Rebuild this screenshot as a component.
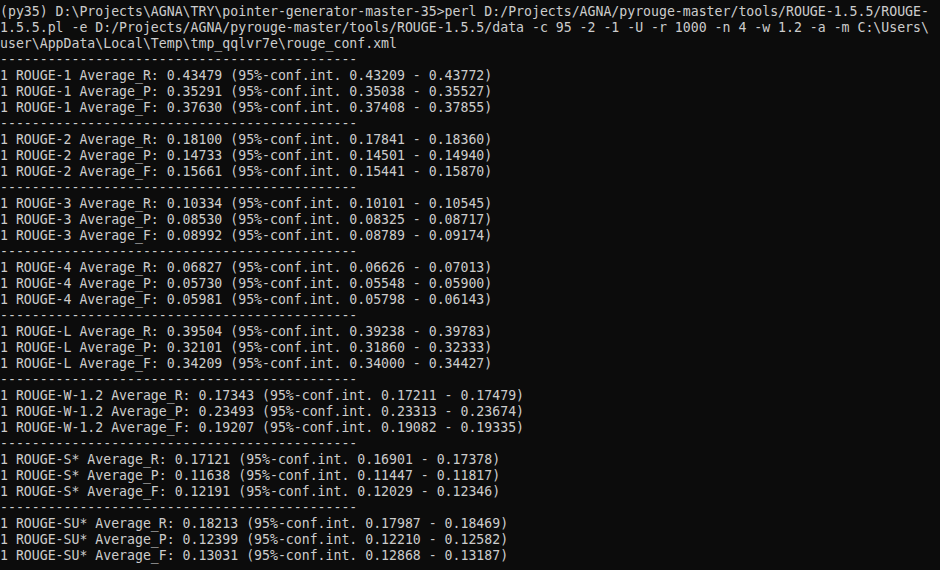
const dash = '-'.repeat(45);

const blocks: [string, string[][]][] = [
  ['ROUGE-1', [
    ['R', '0.43479', '0.43209', '0.43772'],
    ['P', '0.35291', '0.35038', '0.35527'],
    ['F', '0.37630', '0.37408', '0.37855'],
  ]],
  ['ROUGE-2', [
    ['R', '0.18100', '0.17841', '0.18360'],
    ['P', '0.14733', '0.14501', '0.14940'],
    ['F', '0.15661', '0.15441', '0.15870'],
  ]],
  ['ROUGE-3', [
    ['R', '0.10334', '0.10101', '0.10545'],
    ['P', '0.08530', '0.08325', '0.08717'],
    ['F', '0.08992', '0.08789', '0.09174'],
  ]],
  ['ROUGE-4', [
    ['R', '0.06827', '0.06626', '0.07013'],
    ['P', '0.05730', '0.05548', '0.05900'],
    ['F', '0.05981', '0.05798', '0.06143'],
  ]],
  ['ROUGE-L', [
    ['R', '0.39504', '0.39238', '0.39783'],
    ['P', '0.32101', '0.31860', '0.32333'],
    ['F', '0.34209', '0.34000', '0.34427'],
  ]],
  ['ROUGE-W-1.2', [
    ['R', '0.17343', '0.17211', '0.17479'],
    ['P', '0.23493', '0.23313', '0.23674'],
    ['F', '0.19207', '0.19082', '0.19335'],
  ]],
  ['ROUGE-S*', [
    ['R', '0.17121', '0.16901', '0.17378'],
    ['P', '0.11638', '0.11447', '0.11817'],
    ['F', '0.12191', '0.12029', '0.12346'],
  ]],
  ['ROUGE-SU*', [
    ['R', '0.18213', '0.17987', '0.18469'],
    ['P', '0.12399', '0.12210', '0.12582'],
    ['F', '0.13031', '0.12868', '0.13187'],
  ]],
];

const header = [
  '(py35) D:\\Projects\\AGNA\\TRY\\pointer-generator-master-35>perl D:/Projects/AGNA/pyrouge-master/tools/ROUGE-1.5.5/ROUGE-',
  '1.5.5.pl -e D:/Projects/AGNA/pyrouge-master/tools/ROUGE-1.5.5/data -c 95 -2 -1 -U -r 1000 -n 4 -w 1.2 -a -m C:\\Users\\',
  'user\\AppData\\Local\\Temp\\tmp_qqlvr7e\\rouge_conf.xml',
];

const App = () => {
  const lines: string[] = [...header];
  blocks.forEach(([name, rows]) => {
    lines.push(dash);
    rows.forEach(([k, avg, lo, hi]) => {
      lines.push(`1 ${name} Average_${k}: ${avg} (95%-conf.int. ${lo} - ${hi})`);
    });
  });

  return (
    <div className="w-[940px] h-[570px] overflow-hidden bg-[#0c0c0c] pt-[4px]">
      {lines.map((line, i) => (
        <div
          key={i}
          className="h-[16px] leading-[16px] whitespace-pre text-[13.2px] text-[#cccccc]"
          style={{ fontFamily: '"DejaVu Sans Mono", "Liberation Mono", monospace' }}
        >
          {line}
        </div>
      ))}
    </div>
  );
};

export default App;
